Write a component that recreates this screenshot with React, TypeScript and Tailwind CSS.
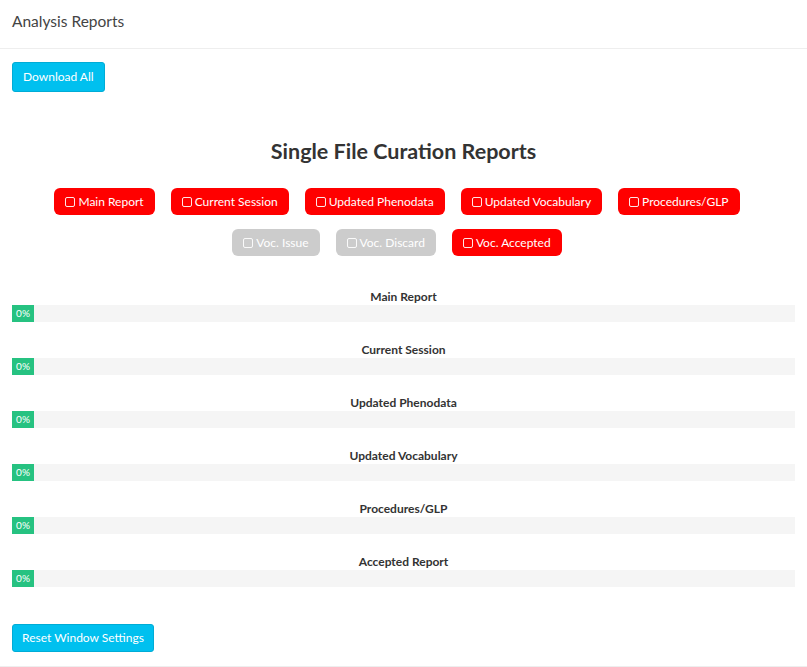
import React from "react";

const row1 = ["Main Report", "Current Session", "Updated Phenodata", "Updated Vocabulary", "Procedures/GLP"];
const row2 = [
  { label: "Voc. Issue", off: true },
  { label: "Voc. Discard", off: true },
  { label: "Voc. Accepted", off: false },
];
const bars = ["Main Report", "Current Session", "Updated Phenodata", "Updated Vocabulary", "Procedures/GLP", "Accepted Report"];

function Toggle({ label, off }: { label: string; off?: boolean }) {
  return (
    <button
      className={`flex h-[27px] items-center gap-[3px] rounded-[6px] px-[11px] text-[12px] text-white ${
        off ? "bg-[#cccccc]" : "bg-[#ff0000]"
      }`}
    >
      <span className="inline-block h-[10px] w-[10px] rounded-[2px] border border-white/90" />
      {label}
    </button>
  );
}

export default function App() {
  return (
    <div className="min-h-[667px] bg-white font-['Lato',sans-serif] text-[#333]">
      <header className="flex h-[49px] items-center border-b border-[#eeeeee] px-[12px] pb-[4px]">
        <h1 className="text-[15.5px] text-[#444]">Analysis Reports</h1>
      </header>

      <div className="pl-[12px] pr-[12px]">
        <div className="pt-[13px]">
          <button className="h-[30px] rounded-[3px] border border-[#00acd6] bg-[#00c0ef] px-[10px] text-[12px] text-white">
            Download All
          </button>
        </div>

        <h2 className="mt-[47px] text-center text-[21.5px] font-bold leading-[24px] text-[#333]">
          Single File Curation Reports
        </h2>

        <div className="mt-[25px] flex justify-center gap-[16px] pr-[13px]">
          {row1.map((l) => (
            <Toggle key={l} label={l} />
          ))}
        </div>
        <div className="mt-[14px] flex justify-center gap-[16px] pr-[13px]">
          {row2.map((b) => (
            <Toggle key={b.label} label={b.label} off={b.off} />
          ))}
        </div>

        <div className="mt-[33px] flex flex-col gap-[20px]">
          {bars.map((b) => (
            <div key={b}>
              <div className="text-center text-[12px] font-bold leading-[16px] text-[#333]">{b}</div>
              <div className="h-[17px] bg-[#f5f5f5]">
                <div className="flex h-full w-[22px] items-center justify-center bg-[#26c281] text-[10px] text-white">
                  0%
                </div>
              </div>
            </div>
          ))}
        </div>

        <div className="mt-[37px] pb-[14px]">
          <button className="h-[28px] rounded-[3px] border border-[#00acd6] bg-[#00c0ef] px-[9px] text-[12px] text-white">
            Reset Window Settings
          </button>
        </div>
      </div>
      <div className="border-b border-[#eeeeee]" />
    </div>
  );
}
